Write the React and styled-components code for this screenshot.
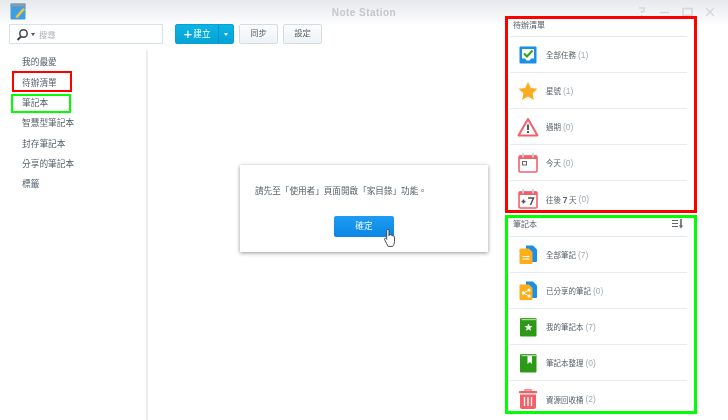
import React from "react";
import styled, { createGlobalStyle } from "styled-components";

const Global = createGlobalStyle`
  html, body { margin: 0; padding: 0; background: #fff; }
  *, *::before, *::after { box-sizing: border-box; }
`;

const FONT = `"Noto Sans CJK TC", "Liberation Sans", sans-serif`;

const Page = styled.div`
  position: relative;
  width: 728px;
  height: 420px;
  overflow: hidden;
  background: #fff;
  font-family: ${FONT};
  font-size: 8.7px;
  color: #535e68;
  filter: blur(0.42px);
`;
const TitleBar = styled.header`
  position: relative;
  height: 24px;
  display: flex;
  align-items: center;
  justify-content: center;
  background: linear-gradient(#e6e9ed, #fdfdfe);
`;
const AppLogo = styled.svg`
  position: absolute;
  left: 10px;
  top: 3px;
`;
const Title = styled.div`
  font: bold 10px "Liberation Sans", sans-serif;
  letter-spacing: 0.45px;
  color: #c3c8cd;
`;
const WindowControls = styled.div`
  position: absolute;
  left: 636px;
  top: 6px;
  display: flex;
`;
const Toolbar = styled.div`
  height: 26px;
  display: flex;
  align-items: flex-start;
  padding-left: 9px;
`;
const Search = styled.div`
  width: 154px;
  height: 20px;
  margin-right: 12px;
  display: flex;
  align-items: center;
  gap: 2px;
  padding-left: 6px;
  border: 1px solid #d8e2ea;
  color: #a9b1b8;
`;
const SearchText = styled.span`
  margin-left: 2px;
  font-size: 8.4px;
`;
const Caret = styled.span`
  width: 0;
  height: 0;
  border-left: 2.5px solid transparent;
  border-right: 2.5px solid transparent;
  border-top: 3px solid ${p => p.$color};
`;
const CreateButton = styled.div`
  width: 59px;
  height: 20px;
  margin-right: 5px;
  display: flex;
  border-radius: 2px;
  color: #fff;
  font-size: 8.6px;
  background: linear-gradient(#0cb4e4, #03a3d6);
  border: 1px solid #07a2d2;
`;
const CreateMain = styled.div`
  flex: 1;
  display: flex;
  align-items: center;
  justify-content: center;
  gap: 1px;
  border-right: 1px solid #0891bd;
  padding-bottom: 3px;
`;
const Plus = styled.span`
  font: 15px "Liberation Sans", sans-serif;
  line-height: 14px;
  margin-top: 3px;
`;
const CreateArrow = styled.div`
  width: 14px;
  display: flex;
  align-items: center;
  justify-content: center;
`;
const PlainButton = styled.div`
  width: 39px;
  height: 20px;
  margin-right: 5px;
  display: flex;
  align-items: center;
  justify-content: center;
  padding-bottom: 5px;
  font-size: 8.4px;
  border: 1px solid #d5dde4;
  border-radius: 2px;
  background: linear-gradient(#fbfcfd, #eff3f6);
  color: #56616b;
`;
const Body = styled.div`
  display: flex;
  height: 370px;
`;
const Sidebar = styled.nav`
  width: 148px;
  padding-top: 2px;
  border-right: 2px solid #eceff2;
  display: flex;
  flex-direction: column;
`;
const NavRow = styled.div`
  height: 20.35px;
  display: flex;
  align-items: center;
  padding-left: 22px;
`;
const NavLabel = styled.span`
  position: relative;
  line-height: 14px;
  &::after {
    content: "";
    display: ${p => (p.$mark ? "block" : "none")};
    position: absolute;
    left: ${p => p.$left}px;
    top: ${p => p.$top}px;
    width: 60px;
    height: ${p => p.$h}px;
    border: 2px solid ${p => p.$mark};
  }
`;
const Dialog = styled.section`
  position: absolute;
  left: 240px;
  top: 165px;
  width: 248px;
  height: 87px;
  display: flex;
  flex-direction: column;
  align-items: center;
  background: #fff;
  box-shadow: 0 1px 4px rgba(0, 0, 0, 0.42);
`;
const Message = styled.p`
  align-self: flex-start;
  margin: 18px 0 0 15px;
  font-size: 8.6px;
  line-height: 14px;
  color: #535e68;
`;
const OkButton = styled.div`
  position: relative;
  width: 60px;
  height: 21px;
  margin-top: 19px;
  display: flex;
  align-items: center;
  justify-content: center;
  padding-bottom: 3px;
  border-radius: 2px;
  color: #e8f4ff;
  background: linear-gradient(#1e9cf3, #0a86e4);
`;
const Cursor = styled.svg`
  position: absolute;
  left: 49px;
  top: 13px;
`;
const Panel = styled.aside`
  position: absolute;
  left: 505px;
  top: ${p => p.$top}px;
  width: 192px;
  height: ${p => p.$h}px;
  border: 3px solid ${p => p.$color};
  background: #fff;
  padding: 0 7px 0 2px;
  overflow: hidden;
`;
const PanelHead = styled.div`
  height: ${p => p.$h}px;
  display: flex;
  align-items: center;
  justify-content: space-between;
  padding: 0 3px 7px 3px;
  font-size: 8px;
  color: #535e68;
  border-bottom: 1px solid #e4e9ee;
`;
const Row = styled.div`
  height: 36px;
  display: flex;
  align-items: center;
  border-bottom: ${p => (p.$last ? "none" : "1px solid #e8ecf0")};
`;
const IconCell = styled.div`
  width: 36px;
  display: flex;
  justify-content: center;
`;
const RowLabel = styled.span`
  font-size: 7.5px;
  color: #535e68;
  white-space: nowrap;
`;
const Count = styled.span`
  margin-left: 2px;
  color: #a3acb4;
  font: 8.5px "Liberation Sans", sans-serif;
`;
const BoldNum = styled.b`
  font: bold 8.5px "Liberation Sans", sans-serif;
`;

const Ico = ({ children, s = 22 }) => (
  <svg width={s} height={s} viewBox="0 0 22 22">{children}</svg>
);

const Calendar = ({ children }) => (
  <Ico>
    <rect x="2" y="4" width="18" height="16" rx="1.2" fill="#fff" stroke="#f4606a" strokeWidth="1.6" />
    <rect x="2" y="3.5" width="18" height="3.5" fill="#f4606a" />
    <rect x="5" y="1.5" width="2" height="4" fill="#c9ccd0" />
    <rect x="15" y="1.5" width="2" height="4" fill="#c9ccd0" />
    {children}
  </Ico>
);

const icons = {
  check: (
    <Ico>
      <rect x="2.5" y="2.5" width="17" height="17" rx="1" fill="#1a8fe8" />
      <path d="M5 5h12v9.5h-3l-1.500 2h-3L8 14.500H5z" fill="#fff" />
      <path d="M7 9.500l3 3 5.500-6" fill="none" stroke="#33a51f" strokeWidth="2.200" />
    </Ico>
  ),
  star: (
    <Ico>
      <path d="M11 2l2.800 6 6.700.8-5 4.500 1.400 6.600L11 16.600 5.100 19.900l1.400-6.600-5-4.500 6.700-.8z" fill="#fbab1d" />
    </Ico>
  ),
  warn: (
    <Ico>
      <path d="M11 3L20.500 19.500H1.500z" fill="#fff" stroke="#f4606a" strokeWidth="2" strokeLinejoin="round" />
      <rect x="10" y="8.500" width="2" height="5.500" fill="#55595e" />
      <rect x="10" y="15" width="2" height="2" fill="#55595e" />
    </Ico>
  ),
  today: (
    <Calendar>
      <rect x="5.500" y="9.500" width="4" height="3.500" fill="none" stroke="#666" strokeWidth="1" />
    </Calendar>
  ),
  week: (
    <Calendar>
      <path d="M4.500 13.500h4M6.500 11.500v4M11 10h5.500l-3 7" fill="none" stroke="#4b5258" strokeWidth="1.500" />
    </Calendar>
  ),
  allNotes: (
    <Ico>
      <path d="M9 1.500h7l4 4v11.500a1 1 0 0 1-1 1H9z" fill="#1a8fe8" />
      <path d="M3.500 4.500H12l3.500 3.500v11a1 1 0 0 1-1 1h-11a1 1 0 0 1-1-1V5.500a1 1 0 0 1 1-1z" fill="#fdae19" />
      <path d="M5.500 12.500h7M5.500 15h7" stroke="#fff" strokeWidth="1.200" />
    </Ico>
  ),
  shared: (
    <Ico>
      <path d="M9 1.500h7l4 4v11.500a1 1 0 0 1-1 1H9z" fill="#1a8fe8" />
      <path d="M3.500 4.500H12l3.500 3.500v11a1 1 0 0 1-1 1h-11a1 1 0 0 1-1-1V5.500a1 1 0 0 1 1-1z" fill="#fdae19" />
      <path d="M12 10L6.500 13l5.500 3" fill="none" stroke="#fff" strokeWidth="1" />
      <circle cx="6.500" cy="13" r="1.700" fill="#fff" />
      <circle cx="12" cy="10" r="1.500" fill="#fff" />
      <circle cx="12" cy="16" r="1.500" fill="#fff" />
    </Ico>
  ),
  book: (
    <Ico>
      <rect x="3" y="2" width="16.500" height="18.500" rx="1.200" fill="#2c9a16" />
      <rect x="4.500" y="2.800" width="15" height="1.400" fill="#a8d89c" />
      <path d="M11.500 7.500l1.100 2.600 2.800.2-2.100 1.800.7 2.700-2.500-1.500-2.500 1.500.7-2.700-2.100-1.800 2.800-.2z" fill="#fff" />
    </Ico>
  ),
  bookmark: (
    <Ico>
      <rect x="3" y="2" width="16.500" height="18.500" rx="1.200" fill="#2c9a16" />
      <rect x="4.500" y="2.800" width="15" height="1.400" fill="#a8d89c" />
      <path d="M10.500 4h4.500v8l-2.250-2-2.250 2z" fill="#fff" />
    </Ico>
  ),
  trash: (
    <Ico>
      <path d="M8 3V1.800h6V3" fill="none" stroke="#f4606a" strokeWidth="1.200" />
      <rect x="1.800" y="3" width="18.400" height="2.200" rx="1" fill="#f4606a" />
      <path d="M3 6.500h16v12.500a2 2 0 0 1-2 2H5a2 2 0 0 1-2-2z" fill="#f4606a" />
      <path d="M7.500 9v9M11 9v9M14.500 9v9" stroke="#fff" strokeWidth="1.300" />
    </Ico>
  ),
};

const nav = ["我的最愛", "待辦清單", "筆記本", "智慧型筆記本", "封存筆記本", "分享的筆記本", "標籤"];
const marks = {
  1: { color: "#ff0000", left: -10, top: -5, h: 21 },
  2: { color: "#00ff00", left: -11, top: -2, h: 19 },
};
const todo = [
  ["check", "全部任務", "(1)"],
  ["star", "星號", "(1)"],
  ["warn", "過期", "(0)"],
  ["today", "今天", "(0)"],
  ["week", <>往後 <BoldNum>7</BoldNum> 天</>, "(0)"],
];
const books = [
  ["allNotes", "全部筆記", "(7)"],
  ["shared", "已分享的筆記", "(0)"],
  ["book", "我的筆記本", "(7)"],
  ["bookmark", "筆記本整理", "(0)"],
  ["trash", "資源回收桶", "(2)"],
];

const Rows = ({ items }) =>
  items.map(([ic, label, n], i) => (
    <Row key={ic} $last={i === items.length - 1}>
      <IconCell>{icons[ic]}</IconCell>
      <RowLabel>{label}</RowLabel>
      <Count>{n}</Count>
    </Row>
  ));

export default function App() {
  return (
    <Page>
      <Global />
      <TitleBar>
        <AppLogo width="17" height="17" viewBox="0 0 17 17">
          <rect x="0.500" y="0.500" width="15" height="16" rx="1" fill="#3f9de0" />
          <rect x="0.500" y="0.500" width="15" height="3" fill="#8a9ba8" />
          <path d="M6 13l7-8 2 1.500-7 8-2.500.5z" fill="#f4c542" />
        </AppLogo>
        <Title>Note Station</Title>
        <WindowControls>
          <svg width="84" height="12" viewBox="0 0 84 12" fill="none" stroke="#d3d7db" strokeWidth="1.400">
            <path d="M3 2h5v3.500H5.500V7M5.500 9v1.500" />
            <path d="M24 6.500h9" />
            <rect x="47" y="2.500" width="9" height="7" strokeWidth="1.600" />
            <path d="M70 2l8 8M78 2l-8 8" />
          </svg>
        </WindowControls>
      </TitleBar>
      <Toolbar>
        <Search>
          <svg width="13" height="13" viewBox="0 0 13 13" fill="none" stroke="#3c4650" strokeWidth="1.500">
            <circle cx="7.500" cy="5.500" r="3.700" />
            <path d="M5 8.500L1.500 12" strokeWidth="2" />
          </svg>
          <Caret $color="#4a545d" />
          <SearchText>搜尋</SearchText>
        </Search>
        <CreateButton>
          <CreateMain><Plus>+</Plus>建立</CreateMain>
          <CreateArrow><Caret $color="#fff" /></CreateArrow>
        </CreateButton>
        <PlainButton>同步</PlainButton>
        <PlainButton>設定</PlainButton>
      </Toolbar>
      <Body>
        <Sidebar>
          {nav.map((n, i) => (
            <NavRow key={n}>
              <NavLabel
                $mark={marks[i]?.color}
                $left={marks[i]?.left}
                $top={marks[i]?.top}
                $h={marks[i]?.h}
              >
                {n}
              </NavLabel>
            </NavRow>
          ))}
        </Sidebar>
      </Body>
      <Dialog>
        <Message>請先至「使用者」頁面開啟「家目錄」功能。</Message>
        <OkButton>
          確定
          <Cursor width="14" height="18" viewBox="0 0 15 19">
            <path
              d="M4 1.500a1.200 1.200 0 0 1 2.400 0V7l.3-1.200c1 -.3 1.800 0 1.800.8.7-.5 1.900-.2 1.900.8.8-.4 2 0 2 1v4.600c0 2.500-1.200 4.500-2 5.500H5.500L1.800 11.500c-.8-1.200.5-2.200 1.500-1.300L4 11z"
              fill="#fff"
              stroke="#3b3f44"
              strokeWidth="1"
            />
          </Cursor>
        </OkButton>
      </Dialog>
      <Panel $top={16} $h={197} $color="#ff0000">
        <PanelHead $h={18}>待辦清單</PanelHead>
        <Rows items={todo} />
      </Panel>
      <Panel $top={215} $h={199} $color="#00ff00">
        <PanelHead $h={19}>
          筆記本
          <svg width="12" height="10" viewBox="0 0 12 10" fill="none" stroke="#5c6670" strokeWidth="1.200">
            <path d="M0 1.500h6M0 4.500h6M0 7.500h6" />
            <path d="M9 0v8" strokeWidth="1.600" />
            <path d="M7 6.500h4L9 9.500z" fill="#5c6670" stroke="none" />
          </svg>
        </PanelHead>
        <Rows items={books} />
      </Panel>
    </Page>
  );
}
